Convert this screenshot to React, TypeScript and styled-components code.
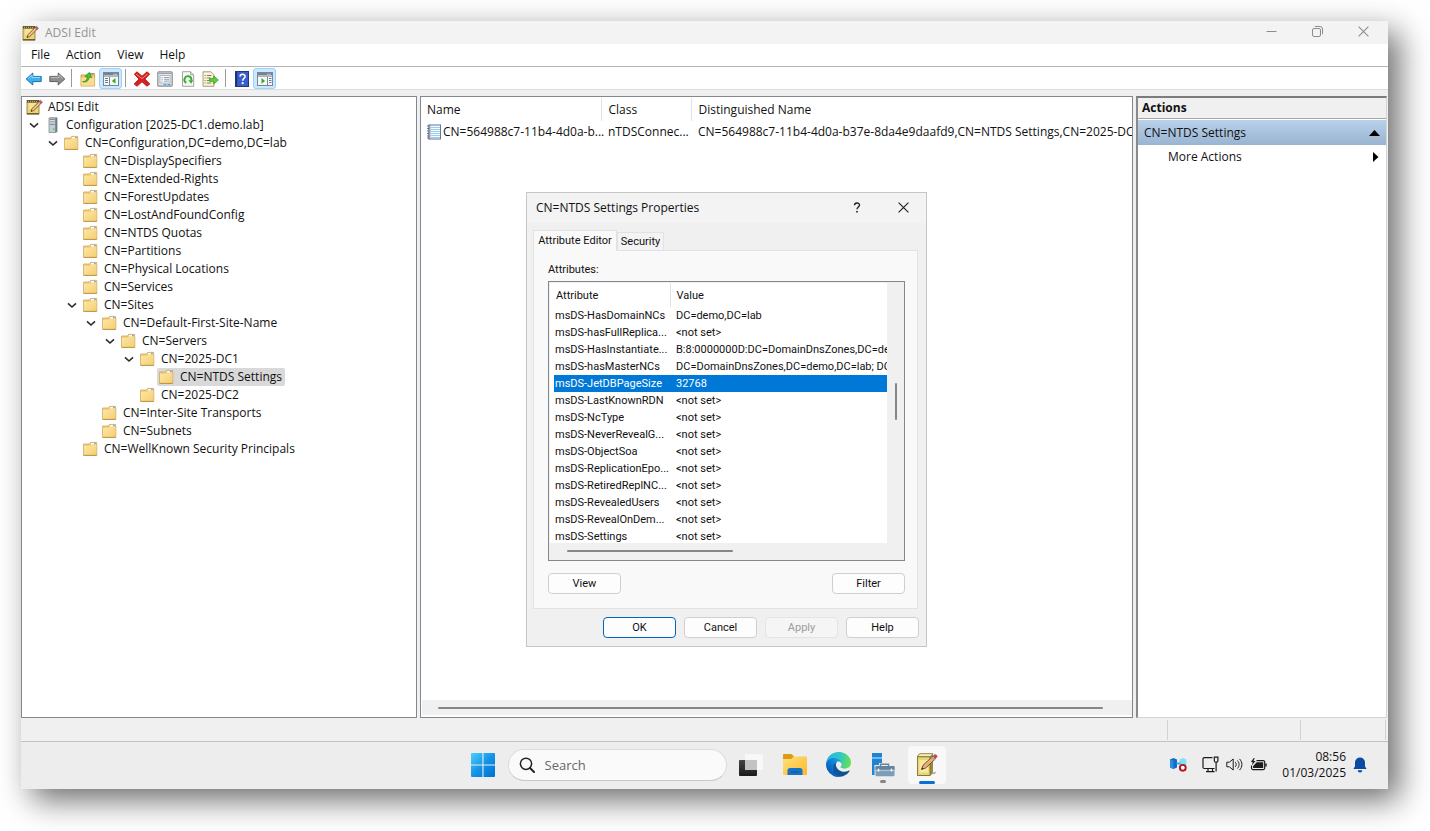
import React from 'react';
import styled, { createGlobalStyle, css } from 'styled-components';

const UI = '"Open Sans", "Noto Sans", sans-serif';
const DLG = 'Roboto, "Liberation Sans", sans-serif';

const Global = createGlobalStyle`
  *, *::before, *::after { box-sizing: border-box; }
  body { margin: 0; background: #fff; color: #111; font: 12px/18px ${UI}; }
  button, input { font: inherit; color: inherit; }
  svg { display: block; flex: none; }
`;

const Desktop = styled.div`
  display: flex;
  min-height: 100vh;
  padding: 21px 42px 42px 21px;
`;

const Screen = styled.main`
  position: relative;
  display: flex;
  flex-direction: column;
  flex: 1;
  min-width: 0;
  background: #f0f0f0;
  box-shadow: 11px 11px 30px rgba(0, 0, 0, 0.58);
`;

const TitleBar = styled.header`
  display: flex;
  align-items: center;
  height: 23px;
  padding: 0 2px 0 1px;
  background: #f3f3f3;
`;

const AppTitle = styled.h1`
  flex: 1;
  margin: 0 0 0 6px;
  font-size: 12px;
  font-weight: 400;
  color: #939393;
`;

const PlainButton = styled.button`
  display: flex;
  align-items: center;
  justify-content: center;
  padding: 0;
  border: 0;
  background: none;
`;

const CaptionButton = styled(PlainButton)<{ $dark?: boolean }>`
  align-self: flex-start;
  width: 46px;
  height: ${(p) => (p.$dark ? '29px' : '21px')};
  color: ${(p) => (p.$dark ? '#1c1c1c' : '#8d8d8d')};
`;

const MenuBar = styled.nav`
  display: flex;
  height: 23px;
  padding: 0 2px;
  background: #fff;
  border-bottom: 1px solid #b4b4b4;
`;

const MenuItem = styled(PlainButton)`
  padding: 0 8px;
`;

const Toolbar = styled.div`
  display: flex;
  align-items: flex-end;
  height: 23px;
  padding: 0 1px;
  background: #fff;
  border-bottom: 1px solid #dcdcdc;
`;

const ToolButton = styled(PlainButton)<{ $on?: boolean }>`
  width: 23px;
  height: 21px;
  border: 1px solid transparent;
  border-radius: 3px;
  ${(p) => p.$on && css`
    background: #cce8ff;
    border-color: #99d1ff;
  `}
`;

const ToolDivider = styled.span`
  width: 1px;
  height: 18px;
  margin: 0 4px 2px 3px;
  background: #9a9a9a;
`;

const Panels = styled.div`
  display: flex;
  flex: 1;
  gap: 3px;
  padding: 6px 1px 0 0;
`;

const Pane = styled.section`
  background: #fff;
  border: 1px solid #828790;
`;

const TreePane = styled(Pane)`
  width: 396px;
`;

const Tree = styled.ul`
  margin: 0;
  padding: 1px 2px;
  list-style: none;
`;

const TreeItem = styled.li<{ $level: number }>`
  display: flex;
  height: 18px;
  padding-left: ${(p) => Math.max(0, p.$level - 1) * 19}px;
`;

const Toggle = styled(PlainButton)`
  width: 19px;
`;

const Node = styled.span<{ $selected?: boolean }>`
  display: flex;
  align-items: center;
  gap: 5px;
  padding: 0 3px 0 2px;
  white-space: nowrap;
  border-radius: 2px;
  background: ${(p) => (p.$selected ? '#d9d9d9' : 'transparent')};
`;

const ResultPane = styled(Pane)`
  display: flex;
  flex-direction: column;
  flex: 1;
  min-width: 0;
  padding: 1px 0 2px 1px;
  overflow: hidden;
`;

const ResultTable = styled.table`
  width: 100%;
  table-layout: fixed;
  border-collapse: collapse;

  th, td {
    padding: 0 0 0 7px;
    font-weight: 400;
    text-align: left;
    white-space: nowrap;
  }
  th:first-child, td:first-child { padding-left: 5px; }
  th { height: 23px; border-right: 1px solid #e2e2e2; }
  th:last-child { border-right: 0; }
  td { height: 21px; }
`;

const WithIcon = styled.span`
  display: flex;
  align-items: center;
  gap: 2px;
`;

const Spacer = styled.div`
  flex: 1;
`;

const HScroll = styled.div`
  display: flex;
  align-items: center;
  height: 15px;
  padding: 0 29px 0 16px;
  background: #f0f0f0;
`;

const Thumb = styled.div<{ $vertical?: boolean; $length?: number }>`
  flex: ${(p) => (p.$length ? 'none' : '1')};
  width: ${(p) => (p.$vertical ? '2px' : p.$length ? `${p.$length}px` : 'auto')};
  height: ${(p) => (p.$vertical ? `${p.$length}px` : '2px')};
  border-radius: 1px;
  background: #868686;
`;

const ActionsPane = styled.aside`
  width: 251px;
  background: #fff;
  border: 1px solid #d4d4d4;
  border-top: 2px solid #7c7c7c;
  border-left: 2px solid #8a8a8a;
`;

const ActionsHeading = styled.h2`
  height: 21px;
  margin: 0 0 1px;
  padding-left: 4px;
  font-size: 12px;
  line-height: 20px;
  font-weight: 700;
  background: #f0f0f0;
  border-bottom: 1px solid #a5a5a5;
`;

const ActionRow = styled(PlainButton)<{ $group?: boolean }>`
  width: 100%;
  height: ${(p) => (p.$group ? '25px' : '24px')};
  justify-content: space-between;
  padding: 0 6px 0 ${(p) => (p.$group ? '6px' : '30px')};
  background: ${(p) => (p.$group ? 'linear-gradient(#b9d1ea, #99b4d1)' : 'none')};
`;

const StatusBar = styled.footer`
  display: flex;
  justify-content: flex-end;
  height: 23px;
  padding: 2px 2px 1px;
`;

const StatusCell = styled.div<{ $width: number }>`
  width: ${(p) => p.$width}px;
  border-right: 1px solid #d2d2d2;
`;

const Taskbar = styled.div`
  display: grid;
  grid-template-columns: 1fr auto 1fr;
  align-items: center;
  height: 48px;
  padding-bottom: 2px;
  background: #ededed;
  border-top: 1px solid #c2c2c2;
`;

const TaskGroup = styled.div`
  grid-column: 2;
  display: flex;
  align-items: center;
`;

const TaskSlot = styled(PlainButton)`
  position: relative;
  width: 44px;
  height: 40px;
`;

const TaskTile = styled.span`
  display: flex;
  align-items: center;
  justify-content: center;
  width: 38px;
  height: 38px;
  border-radius: 4px;
  background: #f8f8f8;
`;

const Indicator = styled.span<{ $active?: boolean }>`
  position: absolute;
  left: 50%;
  bottom: ${(p) => (p.$active ? 1 : 2)}px;
  width: ${(p) => (p.$active ? 16 : 6)}px;
  height: 3px;
  border-radius: 2px;
  background: ${(p) => (p.$active ? '#0a6fd0' : '#858585')};
  transform: translateX(-50%);
`;

const SearchBox = styled.label`
  display: flex;
  align-items: center;
  gap: 10px;
  width: 219px;
  height: 32px;
  margin: 0 2px 0 3px;
  padding: 0 10px;
  border: 1px solid #dcdcdc;
  border-bottom-color: #c8c8c8;
  border-radius: 16px;
  background: #fafafa;
`;

const SearchInput = styled.input`
  flex: 1;
  min-width: 0;
  padding: 0;
  border: 0;
  outline: 0;
  background: none;
  font-size: 13px;
  &::placeholder { color: #666; opacity: 1; }
`;

const Tray = styled.div`
  display: flex;
  align-items: center;
  justify-content: flex-end;
  gap: 7px;
  padding-right: 21px;

  > :first-child { margin-right: 8px; }
`;

const Clock = styled.time`
  width: 72px;
  line-height: 16px;
  text-align: right;
  white-space: pre-line;
`;

const Dialog = styled.section`
  position: absolute;
  left: 505px;
  top: 171px;
  display: flex;
  flex-direction: column;
  width: 401px;
  background: #f0f0f0;
  border: 1px solid #c6c6c6;
  font-family: ${DLG};
  font-size: 11px;
`;

const DialogBar = styled.header`
  display: flex;
  align-items: center;
  height: 30px;
  padding-left: 9px;
  background: #f3f3f3;
`;

const DialogTitle = styled.h2`
  flex: 1;
  margin: 0;
  font-family: ${UI};
  font-size: 12px;
  font-weight: 400;
`;

const Tabs = styled.div`
  display: flex;
  align-items: flex-end;
  padding: 7px 6px 0;
`;

const Tab = styled.button<{ $active?: boolean }>`
  height: ${(p) => (p.$active ? '21px' : '18px')};
  width: ${(p) => (p.$active ? '84px' : '47px')};
  margin-bottom: ${(p) => (p.$active ? '-1px' : '0')};
  padding: 0;
  z-index: 1;
  line-height: 16px;
  white-space: nowrap;
  background: ${(p) => (p.$active ? '#f9f9f9' : '#f3f3f3')};
  border: 1px solid #e2e2e2;
  border-bottom: 0;
`;

const TabPanel = styled.div`
  margin: 0 8px 0 6px;
  padding: 10px 12px 14px 14px;
  background: #f9f9f9;
  border: 1px solid #e2e2e2;
`;

const ListLabel = styled.div`
  margin-bottom: 2px;
`;

const AttributeBox = styled.div`
  display: grid;
  grid-template-columns: 1fr 17px;
  grid-template-rows: 260px 17px;
  padding: 1px 0 0 1px;
  border: 1px solid #828790;
  background: #f0f0f0;
`;

const AttributeView = styled.div`
  overflow: hidden;
  padding-left: 4px;
  background: #fff;
`;

const AttributeTable = styled.table`
  width: 100%;
  table-layout: fixed;
  border-collapse: collapse;
  line-height: 17px;

  th, td {
    padding: 0;
    font-weight: 400;
    text-align: left;
    white-space: nowrap;
    overflow: hidden;
  }
  th { height: 24px; padding-left: 2px; }
  th:first-child { border-right: 1px solid #e2e2e2; }
  th:last-child { padding-left: 6px; }
  td { height: 17px; padding-left: 1px; }
  td:last-child { padding-left: 6px; }
`;

const AttributeRow = styled.tr<{ $selected?: boolean }>`
  ${(p) => p.$selected && css`
    background: #0078d7;
    color: #fff;
  `}
`;

const VTrack = styled.div`
  display: flex;
  justify-content: center;
  padding-top: 100px;
`;

const HTrack = styled.div`
  display: flex;
  padding: 7px 0 0 17px;
`;

const ButtonRow = styled.div<{ $between?: boolean }>`
  display: flex;
  justify-content: ${(p) => (p.$between ? 'space-between' : 'flex-end')};
  gap: 8px;
  padding: ${(p) => (p.$between ? '12px 0 0' : '8px 7px 8px')};
`;

const DialogButton = styled.button<{ $primary?: boolean }>`
  width: 73px;
  height: 21px;
  padding: 0;
  line-height: 16px;
  background: #fdfdfd;
  border: 1px solid ${(p) => (p.$primary ? '#0067c0' : '#cfcfcf')};
  border-radius: 4px;
  &:disabled { background: #f5f5f5; border-color: #e4e4e4; color: #9c9c9c; }
`;

const NotepadIcon = () => (
  <svg width="17" height="16" viewBox="0 0 17 16">
    <rect x="1" y="1.5" width="12" height="13.5" fill="#ecd478" stroke="#8a7434" strokeWidth=".8" />
    <path d="M1 14.8h12" stroke="#5d4d20" strokeWidth="1.2" />
    <rect x="1" y="1.2" width="12" height="2.4" fill="#5c4d28" />
    <path d="M2 2.4h10" stroke="#c9b67c" strokeDasharray="1 1" />
    <path d="M3 5h8M3 7h6M3 9h4" stroke="#fff2b6" strokeWidth="1" />
    <path d="M5 12.5l.9-2.8 7.4-7.3 1.9 1.8-7.4 7.3z" fill="#f4c083" stroke="#6c4826" strokeWidth=".8" />
    <path d="M13.1 2.6l1.4-1.3 2 1.9-1.4 1.3z" fill="#d9555c" stroke="#8d4650" strokeWidth=".5" />
    <path d="M12.2 3.4l1.9 1.9" stroke="#9db4c4" strokeWidth="1" />
    <path d="M5 12.5l.4-1.3.9.9z" fill="#222" />
  </svg>
);

const FolderIcon = () => (
  <svg width="16" height="16" viewBox="0 0 16 16">
    <defs>
      <linearGradient id="fold" x1="0" y1="0" x2="1" y2="1">
        <stop offset="0" stopColor="#ffe6a4" />
        <stop offset="1" stopColor="#f3cf74" />
      </linearGradient>
    </defs>
    <path d="M.6 3h6l1-1.600h6v2h.2v10.800H.6z" fill="#edcb7c" stroke="#cfa657" strokeWidth=".8" />
    <path d="M8.300 2h4.700v1.600H7.600z" fill="#fff" />
    <path d="M11 2.700h1.800" stroke="#4a90d9" strokeWidth="1" />
    <path d="M1 4.700h6l1-.8h5.400v10.100H1z" fill="url(#fold)" />
    <path d="M.6 14.400h13.300" stroke="#b98c3a" strokeWidth=".9" />
  </svg>
);

const ServerIcon = () => (
  <svg width="16" height="16" viewBox="0 0 16 16">
    <path d="M4 1l1.200-.8H12l.4.8v14l-1 .8H4z" fill="#a9b5bf" />
    <path d="M4 1h6.600v14.600H4z" fill="#c3ced6" stroke="#76838e" strokeWidth=".7" />
    <path d="M10.600 1l1.600-.6v14.200l-1.600 1z" fill="#6e7b86" />
    <path d="M5 2.800h4.600M5 5h4.600M5 7.200h4.600" stroke="#5c6873" strokeWidth=".9" />
    <path d="M5 3.700h4.600M5 5.900h4.600" stroke="#f3f7fa" strokeWidth=".8" />
    <circle cx="8.600" cy="12.300" r="1" fill="#62c94a" />
  </svg>
);

const ChevronDown = () => (
  <svg width="10" height="8" viewBox="0 0 10 8">
    <path d="M1 2.400l4 3.600 4-3.600" fill="none" stroke="#2b2b2b" strokeWidth="1.600" />
  </svg>
);

const ArrowIcon = ({ back }: { back?: boolean }) => (
  <svg width="18" height="16" viewBox="0 0 18 16">
    {back ? (
      <path d="M1.200 8l6.600-6v3.400h8.400v5.200H7.800V14z" fill="#3eaef0" stroke="#1b6eb4" strokeWidth="1" strokeLinejoin="round" />
    ) : (
      <path d="M16.800 8l-6.600-6v3.400H1.800v5.200h8.400V14z" fill="#8f8f8f" stroke="#5e5e5e" strokeWidth="1" strokeLinejoin="round" />
    )}
    <path d={back ? 'M3 7.600l4-3.600v2.400h8' : 'M2.600 6.400H11V4l4 3.600'} fill="none" stroke={back ? '#9adcff' : '#bdbdbd'} strokeWidth="1" />
  </svg>
);

const FolderUpIcon = () => (
  <svg width="16" height="16" viewBox="0 0 16 16">
    <path d="M1 4h6l1-1.500h6.600V15H1z" fill="#ecc873" stroke="#c0953f" strokeWidth=".8" />
    <path d="M1.400 6.500h13v8.200h-13z" fill="#f9dd93" />
    <path d="M10.800 3.200h2.600" stroke="#4a90d9" />
    <path d="M2.600 10.800c3-.3 4.300-2 4.800-4.600L4.800 5.600 9.600 1.200l2 5.400-2.300-.3c-.8 3.900-3 5.500-6.700 4.500z" fill="#47c12c" stroke="#23821a" strokeWidth=".6" />
  </svg>
);

const PaneIcon = ({ right }: { right?: boolean }) => (
  <svg width="16" height="14" viewBox="0 0 16 14">
    <rect x=".5" y=".5" width="15" height="13" fill="#f6f8fa" stroke="#7b8794" />
    <rect x="1" y="1" width="14" height="2.500" fill="#76838f" />
    <path d="M10.500 2.300h1M12.500 2.300h1" stroke="#fff" />
    <path d="M1 4.500h14" stroke="#a9b4be" />
    <path d={right ? 'M10.500 5v8' : 'M6.500 5v8'} stroke="#7b8794" />
    <path d={right ? 'M12 6.500h2.500M12 8.500h2.500M12 10.500h2.500' : 'M2 6.500h3M2 8.500h3M2 10.500h3'} stroke="#5f7f9f" />
    <path d={right ? 'M4.500 6l3.600 2.900-3.600 2.900z' : 'M12.500 6L8.900 8.900l3.600 2.900z'} fill="#35ab27" />
  </svg>
);

const DeleteIcon = () => (
  <svg width="18" height="16" viewBox="0 0 18 16">
    <path d="M1.300 3.200L4 .8l5 4.400L14 .8l2.700 2.300L11.900 8l4.900 4.900L14 15.300l-5-4.500-5 4.500L1.200 13 6 8z" fill="#dd1f1f" stroke="#a31212" strokeWidth=".8" strokeLinejoin="round" />
    <path d="M3 3l6 4.600L14.600 3" fill="none" stroke="#f98a80" strokeWidth="1" />
  </svg>
);

const PropertiesIcon = () => (
  <svg width="16" height="16" viewBox="0 0 16 16">
    <rect x=".8" y=".8" width="14.400" height="14.400" rx="1" fill="#e4e7ea" stroke="#8b9096" strokeWidth="1.200" />
    <path d="M1.500 2.500h13" stroke="#9ba2a9" strokeWidth="1" />
    <rect x="3" y="4.500" width="10" height="7.500" fill="#fff" stroke="#a1a9b1" strokeWidth=".8" />
    <path d="M4.500 6.500h1.200M7 6.500h5M4.500 8.300h1.200M7 8.300h5M4.500 10.100h1.200M7 10.100h5" stroke="#7e95ab" strokeWidth=".9" />
    <path d="M6.500 13.600h3M10.500 13.600h3" stroke="#4aa8d8" strokeWidth="1.200" />
  </svg>
);

const RefreshIcon = () => (
  <svg width="16" height="16" viewBox="0 0 16 16">
    <path d="M2.500.7h8l3.200 3.200v11.400H2.500z" fill="#f8f8f4" stroke="#9a9a92" strokeWidth=".9" />
    <path d="M10.500.7v3.200h3.200" fill="#ddd" stroke="#9a9a92" strokeWidth=".8" />
    <path d="M6.300 11.800A3.500 3.500 0 1 1 11.300 9.500" fill="none" stroke="#2fae2b" strokeWidth="1.900" />
    <path d="M8.400 9.200h4.800l-2 3.600z" fill="#2fae2b" />
  </svg>
);

const ExportIcon = () => (
  <svg width="17" height="16" viewBox="0 0 17 16">
    <path d="M1 .8h8l3 3v11.500H1z" fill="#fbf4d4" stroke="#9c9474" strokeWidth=".9" />
    <path d="M2.600 4.500h1M4.800 4.500h4.500M2.600 7h1M4.800 7h4M2.600 9.500h1M4.800 9.500h3M2.600 12h1M4.800 12h4.500" stroke="#77725c" strokeWidth=".9" />
    <path d="M7.500 7.600h4.200V5l4.700 4-4.700 4v-2.600H7.500z" fill="#62cf3a" stroke="#2f9421" strokeWidth=".7" />
  </svg>
);

const HelpIcon = () => (
  <svg width="14" height="16" viewBox="0 0 14 16">
    <rect x=".5" y=".5" width="13" height="15" fill="#3a5fcb" stroke="#24367e" />
    <path d="M1.500 1v14" stroke="#1f2f74" strokeWidth="1.400" />
    <path d="M5.100 5.600c0-3 5-3 5-.2 0 2-2.400 2.100-2.400 4.300" fill="none" stroke="#fff" strokeWidth="1.600" />
    <circle cx="7.700" cy="12.200" r="1.100" fill="#fff" />
  </svg>
);

const RecordIcon = () => (
  <svg width="14" height="16" viewBox="0 0 14 16">
    <rect x="2.500" y="1" width="11" height="14" fill="#f7fbff" stroke="#5a7ba6" />
    <rect x="1" y=".5" width="2.500" height="15" fill="#8d99ad" />
    <path d="M4 3.500h9M4 5.500h9M4 7.500h9M4 9.500h9M4 11.500h9M4 13.500h9" stroke="#9ccdee" />
    <path d="M0 2h2M0 4.500h2M0 7h2M0 9.500h2M0 12h2M0 14h2" stroke="#57606e" strokeWidth=".8" />
  </svg>
);

const CloseIcon = () => (
  <svg width="11" height="11" viewBox="0 0 11 11">
    <path d="M.6.6l9.800 9.800M10.400.6L.6 10.400" stroke="currentColor" strokeWidth="1.100" />
  </svg>
);

const WindowsIcon = () => (
  <svg width="24" height="24" viewBox="0 0 24 24">
    <defs>
      <linearGradient id="win" x1="0" y1="0" x2="1" y2="1">
        <stop offset="0" stopColor="#4fd0fb" />
        <stop offset=".5" stopColor="#1494e6" />
        <stop offset="1" stopColor="#0070cf" />
      </linearGradient>
    </defs>
    <path d="M1 0h10.400v11.400H0V1a1 1 0 0 1 1-1zM12.500 0H23a1 1 0 0 1 1 1v10.400H12.500zM0 12.500h11.400V24H1a1 1 0 0 1-1-1zM12.500 12.500H24V23a1 1 0 0 1-1 1H12.500z" fill="url(#win)" />
  </svg>
);

const SearchIcon = () => (
  <svg width="16" height="16" viewBox="0 0 16 16">
    <circle cx="7" cy="6.800" r="5.600" fill="none" stroke="#222" strokeWidth="1.500" />
    <path d="M11 11l4 4" stroke="#222" strokeWidth="2" strokeLinecap="round" />
  </svg>
);

const TaskViewIcon = () => (
  <svg width="26" height="24" viewBox="0 0 26 24">
    <defs>
      <linearGradient id="tv" x1="0" y1="0" x2="0" y2="1">
        <stop offset="0" stopColor="#444" />
        <stop offset="1" stopColor="#1c1c1c" />
      </linearGradient>
    </defs>
    <rect x="1" y="7" width="18" height="16" rx="1" fill="url(#tv)" />
    <rect x="7" y="1" width="18" height="16" rx="1" fill="#fafafa" fillOpacity=".8" />
    <rect x="7" y="7" width="12" height="10" fill="#c3c3c3" />
  </svg>
);

const ExplorerIcon = () => (
  <svg width="26" height="24" viewBox="0 0 26 24">
    <defs>
      <linearGradient id="exy" x1="0" y1="0" x2="1" y2="1">
        <stop offset="0" stopColor="#ffe07c" />
        <stop offset="1" stopColor="#fcb92c" />
      </linearGradient>
    </defs>
    <path d="M1 2.200C1 1.500 1.500 1 2.200 1h7.300l2.500 2.500V8H1z" fill="#dc9b12" />
    <path d="M1 6h8l3-2.500h12c.6 0 1 .4 1 1V21c0 .6-.4 1-1 1H2c-.6 0-1-.4-1-1z" fill="url(#exy)" />
    <path d="M5.500 22v-4.500c0-1.400 1-2.500 2.500-2.500h10c1.500 0 2.500 1.100 2.500 2.500V22z" fill="#1672c4" />
    <path d="M9 18.500h8v1H9z" fill="#0d569a" />
  </svg>
);

const EdgeIcon = () => (
  <svg width="25" height="25" viewBox="0 0 256 256">
    <defs>
      <linearGradient id="eg1" x1="63" y1="178" x2="242" y2="178" gradientUnits="userSpaceOnUse">
        <stop offset="0" stopColor="#0c59a4" />
        <stop offset="1" stopColor="#114a8b" />
      </linearGradient>
      <linearGradient id="eg2" x1="157" y1="100" x2="46" y2="222" gradientUnits="userSpaceOnUse">
        <stop offset="0" stopColor="#1b9de2" />
        <stop offset=".6" stopColor="#0e72ca" />
        <stop offset="1" stopColor="#0a58b6" />
      </linearGradient>
      <linearGradient id="eg3" x1="20" y1="60" x2="250" y2="110" gradientUnits="userSpaceOnUse">
        <stop offset="0" stopColor="#2db5e6" />
        <stop offset=".5" stopColor="#2fc8c4" />
        <stop offset="1" stopColor="#6be04e" />
      </linearGradient>
    </defs>
    <path d="M236 190.500a94 94 0 0 1-10.500 4.700 102 102 0 0 1-36 6.500c-47.400 0-88.700-32.600-88.700-74.500a31.500 31.500 0 0 1 16.500-27.300c-42.900 1.800-53.900 46.500-53.900 72.700 0 74 68.200 81.600 82.900 81.600 7.900 0 19.800-2.300 27-4.600l1.300-.4a128 128 0 0 0 66.600-52.800 4 4 0 0 0-5.200-5.900z" fill="url(#eg1)" />
    <path d="M105.700 241.400a79 79 0 0 1-22.700-21.300 80.700 80.700 0 0 1 29.500-120c3.200-1.500 8.500-4.200 15.600-4.100a32.400 32.400 0 0 1 25.700 13c4.100 5.500 6.300 12 6.400 18.700 0-.2 24.500-79.600-80-79.600-43.900 0-80 41.700-80 78.200a130 130 0 0 0 12.100 56 128 128 0 0 0 156.400 67.100 75.500 75.500 0 0 1-63-8z" fill="url(#eg2)" />
    <path d="M152.300 148.900c-.9 1-3.400 2.500-3.400 5.600 0 2.600 1.700 5.200 4.800 7.300 14.400 10.100 41.700 8.700 41.700 8.700 10.700 0 21.300-2.900 30.500-8.300A61.900 61.900 0 0 0 256 109c.3-22.400-8-37.300-11.300-43.900C223.500 23.900 177.700 0 128 0A128 128 0 0 0 0 126.200c.5-36.500 36.800-66 80-66 3.500 0 23.500.3 42 10a72.600 72.600 0 0 1 30.900 29.300c6.100 10.600 7.200 24.100 7.200 29.500s-2.700 13.300-7.800 19.900z" fill="url(#eg3)" />
  </svg>
);

const ServerManagerIcon = () => (
  <svg width="25" height="26" viewBox="0 0 25 26">
    <path d="M2 1h10v22H2z" fill="#1d83d4" />
    <path d="M2 6h10" stroke="#d5eafa" strokeWidth="1" />
    <path d="M9 11h13v3H9z" fill="#ededed" />
    <rect x="4.500" y="13" width="20.500" height="12" fill="#ededed" />
    <path d="M10.500 14.500v-2.300h8v2.300" fill="none" stroke="#66839d" strokeWidth="1.400" />
    <rect x="5.500" y="14" width="19" height="10.300" rx="1" fill="#7d9cb8" />
    <path d="M5.500 15a1 1 0 0 1 1-1h17a1 1 0 0 1 1 1v3h-19z" fill="#66839d" />
    <path d="M5.500 18.300h19" stroke="#cfdde9" strokeWidth=".8" />
    <path d="M8.500 16.800v2.600M21.500 16.800v2.600" stroke="#fff" strokeWidth="1.500" />
  </svg>
);

const NotebookLargeIcon = () => (
  <svg width="24" height="26" viewBox="0 0 24 26">
    <path d="M2.500 3.500L5 1.500h13v19.500L15 24H2.500z" fill="#9c8940" />
    <path d="M2.500 4l2.500-2.300h13l-2.800 3.100H2.500z" fill="#f6eebb" stroke="#867335" strokeWidth=".7" />
    <path d="M2.500 4.800H15V23.500H2.500z" fill="#e8d676" stroke="#7a6727" strokeWidth=".8" />
    <path d="M4.500 8h8.500v12.500H4.500z" fill="#f5eaa4" />
    <path d="M17.500 20.500l4-.8-1.500 2-4 1z" fill="#aaa" />
    <path d="M6.500 17.500l1.500-4.200L18 4l2.700 2.600L10.700 16z" fill="#e7b078" stroke="#6d4a2b" strokeWidth=".9" />
    <path d="M17.700 4.300l1.700-1.900c1-.9 3.700 1.200 2.900 2.500l-1.700 1.900z" fill="#c8484e" />
    <path d="M16.500 5.300l3 2.700" stroke="#8fa5b5" strokeWidth="1.300" />
    <path d="M6.500 17.500l.7-2 1.500 1.300z" fill="#222" />
  </svg>
);

const SyncTrayIcon = () => (
  <svg width="17" height="15" viewBox="0 0 17 15">
    <path d="M0 2.500l3.500-1.500L7 2.500v8L3.500 12 0 10.500z" fill="#1769c8" />
    <path d="M0 2.500l3.500 1.300v8.200L0 10.500z" fill="#2b8ce6" />
    <path d="M9.500 2.500l3.500-1.500 3.300 1.500v6l-6.800 2z" fill="#7fe0f8" />
    <path d="M6.500 5.500h4v2h-4z" fill="#36a8e4" />
    <circle cx="12.800" cy="10.800" r="2.900" fill="#fff" stroke="#b31218" strokeWidth="1.900" />
  </svg>
);

const NetworkIcon = () => (
  <svg width="17" height="17" viewBox="0 0 17 17" fill="none" stroke="#1b1b1b" strokeWidth="1.200">
    <path d="M10.500 1.600H2.200a1.200 1.200 0 0 0-1.200 1.200v8.500a1.200 1.200 0 0 0 1.200 1.200h10.300" />
    <path d="M6 12.500v3M10.500 12.500v3M4 15.700h8.500" />
    <path d="M12.300 1.200h3.600v3.300a1.800 1.800 0 0 1-3.600 0zM14.100 6.500v9" />
  </svg>
);

const VolumeIcon = () => (
  <svg width="17" height="15" viewBox="0 0 17 15" fill="none" stroke="#1b1b1b" strokeWidth="1">
    <path d="M.8 5.200h2.600L7.200 2v11L3.400 9.800H.8z" strokeLinejoin="round" />
    <path d="M9.300 5.200c1.200 1.400 1.200 3.200 0 4.600M11.400 3.500c2.200 2.400 2.200 5.600 0 8M13.500 1.900c3.200 3.400 3.200 7.800 0 11.200" />
  </svg>
);

const BatteryIcon = () => (
  <svg width="17" height="13" viewBox="0 0 17 13">
    <path d="M6.500 2.600h6.700a1.500 1.500 0 0 1 1.500 1.500v6a1.500 1.500 0 0 1-1.500 1.500H3a1.500 1.500 0 0 1-1.500-1.500V7.500" fill="none" stroke="#1b1b1b" strokeWidth="1.200" />
    <path d="M6.600 4.200h6.600v5.900H3V8.200z" fill="#1b1b1b" />
    <path d="M15.300 5.600h1.400v3h-1.400z" fill="#1b1b1b" />
    <path d="M3.800 0L.8 4h1.900L1.900 7.200 5.600 3H3.500l1.200-3z" fill="#1b1b1b" />
  </svg>
);

const BellIcon = () => (
  <svg width="14" height="16" viewBox="0 0 14 16">
    <path d="M7 .5a5 5 0 0 1 5 5v3.700l1.600 2.700H.4L2 9.200V5.500a5 5 0 0 1 5-5z" fill="#0b4aa0" />
    <path d="M4.700 13.200h4.600a2.300 2.300 0 0 1-4.600 0z" fill="#0b4aa0" />
  </svg>
);

type TreeNode = { label: string; level: number; open?: boolean; selected?: boolean; icon?: 'pad' | 'server' };

const tree: TreeNode[] = [
  { label: 'ADSI Edit', level: 0, icon: 'pad' },
  { label: 'Configuration [2025-DC1.demo.lab]', level: 1, open: true, icon: 'server' },
  { label: 'CN=Configuration,DC=demo,DC=lab', level: 2, open: true },
  { label: 'CN=DisplaySpecifiers', level: 3 },
  { label: 'CN=Extended-Rights', level: 3 },
  { label: 'CN=ForestUpdates', level: 3 },
  { label: 'CN=LostAndFoundConfig', level: 3 },
  { label: 'CN=NTDS Quotas', level: 3 },
  { label: 'CN=Partitions', level: 3 },
  { label: 'CN=Physical Locations', level: 3 },
  { label: 'CN=Services', level: 3 },
  { label: 'CN=Sites', level: 3, open: true },
  { label: 'CN=Default-First-Site-Name', level: 4, open: true },
  { label: 'CN=Servers', level: 5, open: true },
  { label: 'CN=2025-DC1', level: 6, open: true },
  { label: 'CN=NTDS Settings', level: 7, selected: true },
  { label: 'CN=2025-DC2', level: 6 },
  { label: 'CN=Inter-Site Transports', level: 4 },
  { label: 'CN=Subnets', level: 4 },
  { label: 'CN=WellKnown Security Principals', level: 3 },
];

const attributes: [string, string][] = [
  ['msDS-HasDomainNCs', 'DC=demo,DC=lab'],
  ['msDS-hasFullReplica...', '<not set>'],
  ['msDS-HasInstantiate...', 'B:8:0000000D:DC=DomainDnsZones,DC=de'],
  ['msDS-hasMasterNCs', 'DC=DomainDnsZones,DC=demo,DC=lab; DC'],
  ['msDS-JetDBPageSize', '32768'],
  ['msDS-LastKnownRDN', '<not set>'],
  ['msDS-NcType', '<not set>'],
  ['msDS-NeverRevealG...', '<not set>'],
  ['msDS-ObjectSoa', '<not set>'],
  ['msDS-ReplicationEpo...', '<not set>'],
  ['msDS-RetiredReplNC...', '<not set>'],
  ['msDS-RevealedUsers', '<not set>'],
  ['msDS-RevealOnDem...', '<not set>'],
  ['msDS-Settings', '<not set>'],
];

const nodeIcon = (kind?: TreeNode['icon']) =>
  kind === 'pad' ? <NotepadIcon /> : kind === 'server' ? <ServerIcon /> : <FolderIcon />;

function PropertiesDialog() {
  return (
    <Dialog role="dialog" aria-labelledby="dlg-title">
      <DialogBar>
        <DialogTitle id="dlg-title">CN=NTDS Settings Properties</DialogTitle>
        <CaptionButton $dark aria-label="Context help">
          <svg width="8" height="11" viewBox="0 0 8 11">
            <path d="M1.500 3.200c0-3 5-2.900 5-.2C6.500 5 4 5 4 7.300" fill="none" stroke="#222" strokeWidth="1.400" />
            <circle cx="4" cy="9.700" r=".9" fill="#222" />
          </svg>
        </CaptionButton>
        <CaptionButton $dark aria-label="Close dialog"><CloseIcon /></CaptionButton>
      </DialogBar>
      <Tabs role="tablist">
        <Tab role="tab" aria-selected="true" $active>Attribute Editor</Tab>
        <Tab role="tab" aria-selected="false">Security</Tab>
      </Tabs>
      <TabPanel role="tabpanel">
        <ListLabel id="attr-label">Attributes:</ListLabel>
        <AttributeBox>
          <AttributeView>
            <AttributeTable aria-labelledby="attr-label">
              <colgroup>
                <col width="116" />
                <col />
              </colgroup>
              <thead>
                <tr><th>Attribute</th><th>Value</th></tr>
              </thead>
              <tbody>
                {attributes.map(([name, value]) => (
                  <AttributeRow key={name} $selected={value === '32768'}>
                    <td>{name}</td>
                    <td>{value}</td>
                  </AttributeRow>
                ))}
              </tbody>
            </AttributeTable>
          </AttributeView>
          <VTrack><Thumb $vertical $length={37} /></VTrack>
          <HTrack><Thumb $length={166} /></HTrack>
        </AttributeBox>
        <ButtonRow $between>
          <DialogButton>View</DialogButton>
          <DialogButton>Filter</DialogButton>
        </ButtonRow>
      </TabPanel>
      <ButtonRow>
        <DialogButton $primary>OK</DialogButton>
        <DialogButton>Cancel</DialogButton>
        <DialogButton disabled>Apply</DialogButton>
        <DialogButton>Help</DialogButton>
      </ButtonRow>
    </Dialog>
  );
}

export default function App() {
  return (
    <>
      <Global />
      <Desktop>
        <Screen>
          <TitleBar>
            <NotepadIcon />
            <AppTitle>ADSI Edit</AppTitle>
            <CaptionButton aria-label="Minimize">
              <svg width="11" height="11" viewBox="0 0 11 11"><path d="M.5 5.500h10" stroke="currentColor" /></svg>
            </CaptionButton>
            <CaptionButton aria-label="Restore">
              <svg width="11" height="11" viewBox="0 0 11 11" fill="none" stroke="currentColor">
                <rect x=".5" y="2.500" width="8" height="8" rx="1.500" />
                <path d="M2.800.5H8A2.500 2.500 0 0 1 10.500 3v5.200" />
              </svg>
            </CaptionButton>
            <CaptionButton aria-label="Close"><CloseIcon /></CaptionButton>
          </TitleBar>
          <MenuBar>
            {['File', 'Action', 'View', 'Help'].map((m) => <MenuItem key={m}>{m}</MenuItem>)}
          </MenuBar>
          <Toolbar role="toolbar">
            <ToolButton aria-label="Back"><ArrowIcon back /></ToolButton>
            <ToolButton aria-label="Forward"><ArrowIcon /></ToolButton>
            <ToolDivider />
            <ToolButton aria-label="Up one level"><FolderUpIcon /></ToolButton>
            <ToolButton aria-label="Show console tree" $on><PaneIcon /></ToolButton>
            <ToolDivider />
            <ToolButton aria-label="Delete"><DeleteIcon /></ToolButton>
            <ToolButton aria-label="Properties"><PropertiesIcon /></ToolButton>
            <ToolButton aria-label="Refresh"><RefreshIcon /></ToolButton>
            <ToolButton aria-label="Export list"><ExportIcon /></ToolButton>
            <ToolDivider />
            <ToolButton aria-label="Help"><HelpIcon /></ToolButton>
            <ToolButton aria-label="Show action pane" $on><PaneIcon right /></ToolButton>
          </Toolbar>

          <Panels>
            <TreePane>
              <Tree>
                {tree.map((n) => (
                  <TreeItem key={n.label} $level={n.level}>
                    {n.open && <Toggle aria-label={`Collapse ${n.label}`}><ChevronDown /></Toggle>}
                    {!n.open && n.level > 0 && <Toggle as="span" />}
                    <Node $selected={n.selected}>{nodeIcon(n.icon)}{n.label}</Node>
                  </TreeItem>
                ))}
              </Tree>
            </TreePane>

            <ResultPane>
              <ResultTable>
                <colgroup>
                  <col width="179" />
                  <col width="90" />
                  <col />
                </colgroup>
                <thead>
                  <tr><th>Name</th><th>Class</th><th>Distinguished Name</th></tr>
                </thead>
                <tbody>
                  <tr>
                    <td><WithIcon><RecordIcon />CN=564988c7-11b4-4d0a-b...</WithIcon></td>
                    <td>nTDSConnec...</td>
                    <td>CN=564988c7-11b4-4d0a-b37e-8da4e9daafd9,CN=NTDS Settings,CN=2025-DC1,..</td>
                  </tr>
                </tbody>
              </ResultTable>
              <Spacer />
              <HScroll><Thumb /></HScroll>
            </ResultPane>

            <ActionsPane>
              <ActionsHeading>Actions</ActionsHeading>
              <ActionRow $group>
                CN=NTDS Settings
                <svg width="11" height="6" viewBox="0 0 11 6"><path d="M0 6l5.500-6L11 6z" /></svg>
              </ActionRow>
              <ActionRow>
                More Actions
                <svg width="9" height="10" viewBox="0 0 9 10"><path d="M2 0l5.500 5L2 10z" /></svg>
              </ActionRow>
            </ActionsPane>
          </Panels>

          <StatusBar>
            <StatusCell $width={10} />
            <StatusCell $width={133} />
            <StatusCell $width={85} />
          </StatusBar>

          <Taskbar>
            <TaskGroup>
              <TaskSlot aria-label="Start"><WindowsIcon /></TaskSlot>
              <SearchBox>
                <SearchIcon />
                <SearchInput type="text" placeholder="Search" aria-label="Search" />
              </SearchBox>
              <TaskSlot aria-label="Task view"><TaskViewIcon /></TaskSlot>
              <TaskSlot aria-label="File Explorer"><ExplorerIcon /></TaskSlot>
              <TaskSlot aria-label="Microsoft Edge"><EdgeIcon /></TaskSlot>
              <TaskSlot aria-label="Server Manager"><ServerManagerIcon /><Indicator /></TaskSlot>
              <TaskSlot aria-label="ADSI Edit">
                <TaskTile><NotebookLargeIcon /></TaskTile>
                <Indicator $active />
              </TaskSlot>
            </TaskGroup>
            <Tray>
              <SyncTrayIcon />
              <NetworkIcon />
              <VolumeIcon />
              <BatteryIcon />
              <Clock>{'08:56\n01/03/2025'}</Clock>
              <BellIcon />
            </Tray>
          </Taskbar>

          <PropertiesDialog />
        </Screen>
      </Desktop>
    </>
  );
}
